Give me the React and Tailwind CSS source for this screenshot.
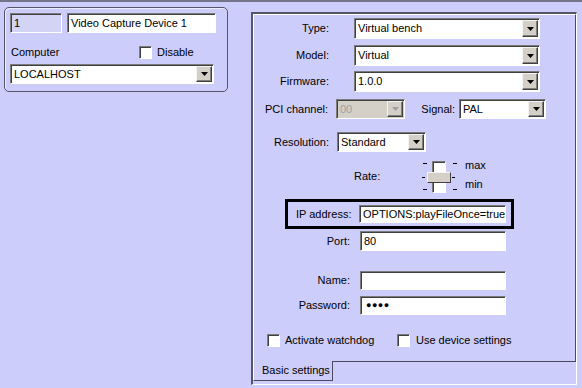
import React from "react";

const sunken =
  "border border-t-[#7b7b7b] border-l-[#7b7b7b] border-r-white border-b-white shadow-[inset_1px_1px_0_#404040]";

const Arrow = ({ disabled }) => (
  <svg width="7" height="4" viewBox="0 0 7 4">
    <path d="M0 0h7L3.5 4z" fill={disabled ? "#a0a0a0" : "#000"} />
  </svg>
);

const DropButton = ({ disabled }) => (
  <div className="w-[16px] self-stretch flex items-center justify-center bg-[#d4d0c8] border border-t-[#f4f4f4] border-l-[#f4f4f4] border-r-[#404040] border-b-[#404040] shadow-[inset_-1px_-1px_0_#808080]">
    <Arrow disabled={disabled} />
  </div>
);

const Select = ({ value, className, disabled }) => (
  <div
    className={`flex p-[1px] ${sunken} ${
      disabled ? "bg-[#d4d0c8] text-[#a0a0a0]" : "bg-white"
    } ${className}`}
  >
    <span className="flex-1 pl-[2px] flex items-center">{value}</span>
    <DropButton disabled={disabled} />
  </div>
);

const Input = ({ value, className }) => (
  <div className={`flex items-center pl-[3px] overflow-hidden ${sunken} ${className}`}>
    {value}
  </div>
);

const Check = () => <div className={`w-[13px] h-[13px] bg-white ${sunken}`} />;

const Rate = () => (
  <div className="relative w-[40px] h-[38px]">
    <div className={`absolute left-[12px] top-[4px] w-[14px] h-[32px] bg-white ${sunken}`} />
    <div className="absolute left-[7px] top-[15px] w-[24px] h-[11px] bg-[#d4d0c8] border border-t-[#f4f4f4] border-l-[#f4f4f4] border-r-[#404040] border-b-[#404040]" />
    <div className="absolute left-[3px] top-[6px] w-[4px] h-[1px] bg-black" />
    <div className="absolute left-[3px] top-[32px] w-[4px] h-[1px] bg-black" />
    <div className="absolute left-[2px] top-[20px] w-[3px] h-[1px] bg-black" />
    <div className="absolute left-[33px] top-[6px] w-[4px] h-[1px] bg-black" />
    <div className="absolute left-[33px] top-[32px] w-[4px] h-[1px] bg-black" />
    <div className="absolute left-[32px] top-[20px] w-[3px] h-[1px] bg-black" />
  </div>
);

export default function App() {
  return (
    <div className="w-[582px] h-[388px] overflow-hidden flex bg-[#cdcdfb] border-t-2 border-[#74748a] text-[11px] text-black font-['Liberation_Sans',Arial,sans-serif] leading-none whitespace-nowrap">
      {/* device panel */}
      <div className="w-[251px] shrink-0 pt-[5px] pl-[4px]">
        <div className="w-[224px] h-[85px] rounded-[5px] border border-[#55556a] shadow-[inset_1px_1px_0_#ececff]">
          <div className="mt-[5px] pl-[5px] flex">
            <Input value="1" className="w-[52px] h-[20px] bg-[#d3d3f6]" />
            <Input value="Video Capture Device 1" className="ml-[5px] w-[149px] h-[20px] bg-white" />
          </div>
          <div className="mt-[13px] flex items-center h-[13px]">
            <span className="ml-[6px] w-[128px]">Computer</span>
            <Check />
            <span className="ml-[5px]">Disable</span>
          </div>
          <div className="mt-[5px] pl-[5px]">
            <Select value="LOCALHOST" className="w-[204px] h-[20px]" />
          </div>
        </div>
      </div>

      {/* settings tabs */}
      <div className="pt-[10px]">
        <div className="w-[326px] h-[373px] border-l-2 border-t-2 border-l-[#55556a] border-t-[#55556a] border-r border-b border-r-white border-b-white">
          <div className="w-[323px] h-[348px] border border-t-white border-l-white border-r-[#4a4a5c] border-b-[#4a4a5c] flex flex-col">
            <div className="mt-[3px] flex items-center">
              <span className="w-[75px] text-right">Type:</span>
              <Select value="Virtual bench" className="ml-[25px] w-[186px] h-[21px]" />
            </div>
            <div className="mt-[6px] flex items-center">
              <span className="w-[75px] text-right">Model:</span>
              <Select value="Virtual" className="ml-[25px] w-[186px] h-[21px]" />
            </div>
            <div className="mt-[5px] flex items-center">
              <span className="w-[75px] text-right">Firmware:</span>
              <Select value="1.0.0" className="ml-[25px] w-[186px] h-[21px]" />
            </div>
            <div className="mt-[7px] flex items-center">
              <span className="w-[74px] text-right">PCI channel:</span>
              <Select value="00" disabled className="ml-[8px] w-[69px] h-[20px]" />
              <span className="ml-[14px] w-[36px] text-right">Signal:</span>
              <Select value="PAL" className="ml-[4px] w-[87px] h-[20px]" />
            </div>
            <div className="mt-[13px] flex items-center">
              <span className="w-[75px] text-right">Resolution:</span>
              <Select value="Standard" className="ml-[8px] w-[89px] h-[20px]" />
            </div>
            <div className="mt-[5px] flex items-center h-[38px]">
              <span className="ml-[100px] w-[66px]">Rate:</span>
              <Rate />
              <div className="ml-[5px] flex flex-col justify-between h-[30px] mt-[-2px]">
                <span>max</span>
                <span>min</span>
              </div>
            </div>
            <div className="mt-[4px] ml-[31px] w-[229px] h-[30px] border-[3px] border-black flex items-center pl-[8px]">
              <span className="w-[63px]">IP address:</span>
              <Input value="OPTIONS:playFileOnce=true" className="w-[147px] h-[18px] bg-white" />
            </div>
            <div className="mt-[2px] flex items-center">
              <span className="w-[96px] text-right">Port:</span>
              <Input value="80" className="ml-[10px] w-[146px] h-[20px] bg-white" />
            </div>
            <div className="mt-[20px] flex items-center">
              <span className="w-[96px] text-right">Name:</span>
              <Input value="" className="ml-[10px] w-[146px] h-[19px] bg-white" />
            </div>
            <div className="mt-[6px] flex items-center">
              <span className="w-[96px] text-right">Password:</span>
              <Input
                value={<span className="text-[9px] tracking-[0.5px]">●●●●</span>}
                className="ml-[10px] w-[146px] h-[19px] bg-white pl-[5px]"
              />
            </div>
            <div className="mt-[19px] flex items-center pl-[13px]">
              <div className="w-[130px] flex items-center">
                <Check />
                <span className="ml-[5px]">Activate watchdog</span>
              </div>
              <Check />
              <span className="ml-[6px]">Use device settings</span>
            </div>
          </div>
          <div className="relative -mt-[1px] w-[80px] h-[20px] bg-[#cdcdfb] border-l border-l-white border-r border-r-[#4a4a5c] border-b border-b-[#4a4a5c] flex items-center pl-[8px]">
            Basic settings
          </div>
        </div>
      </div>
    </div>
  );
}
